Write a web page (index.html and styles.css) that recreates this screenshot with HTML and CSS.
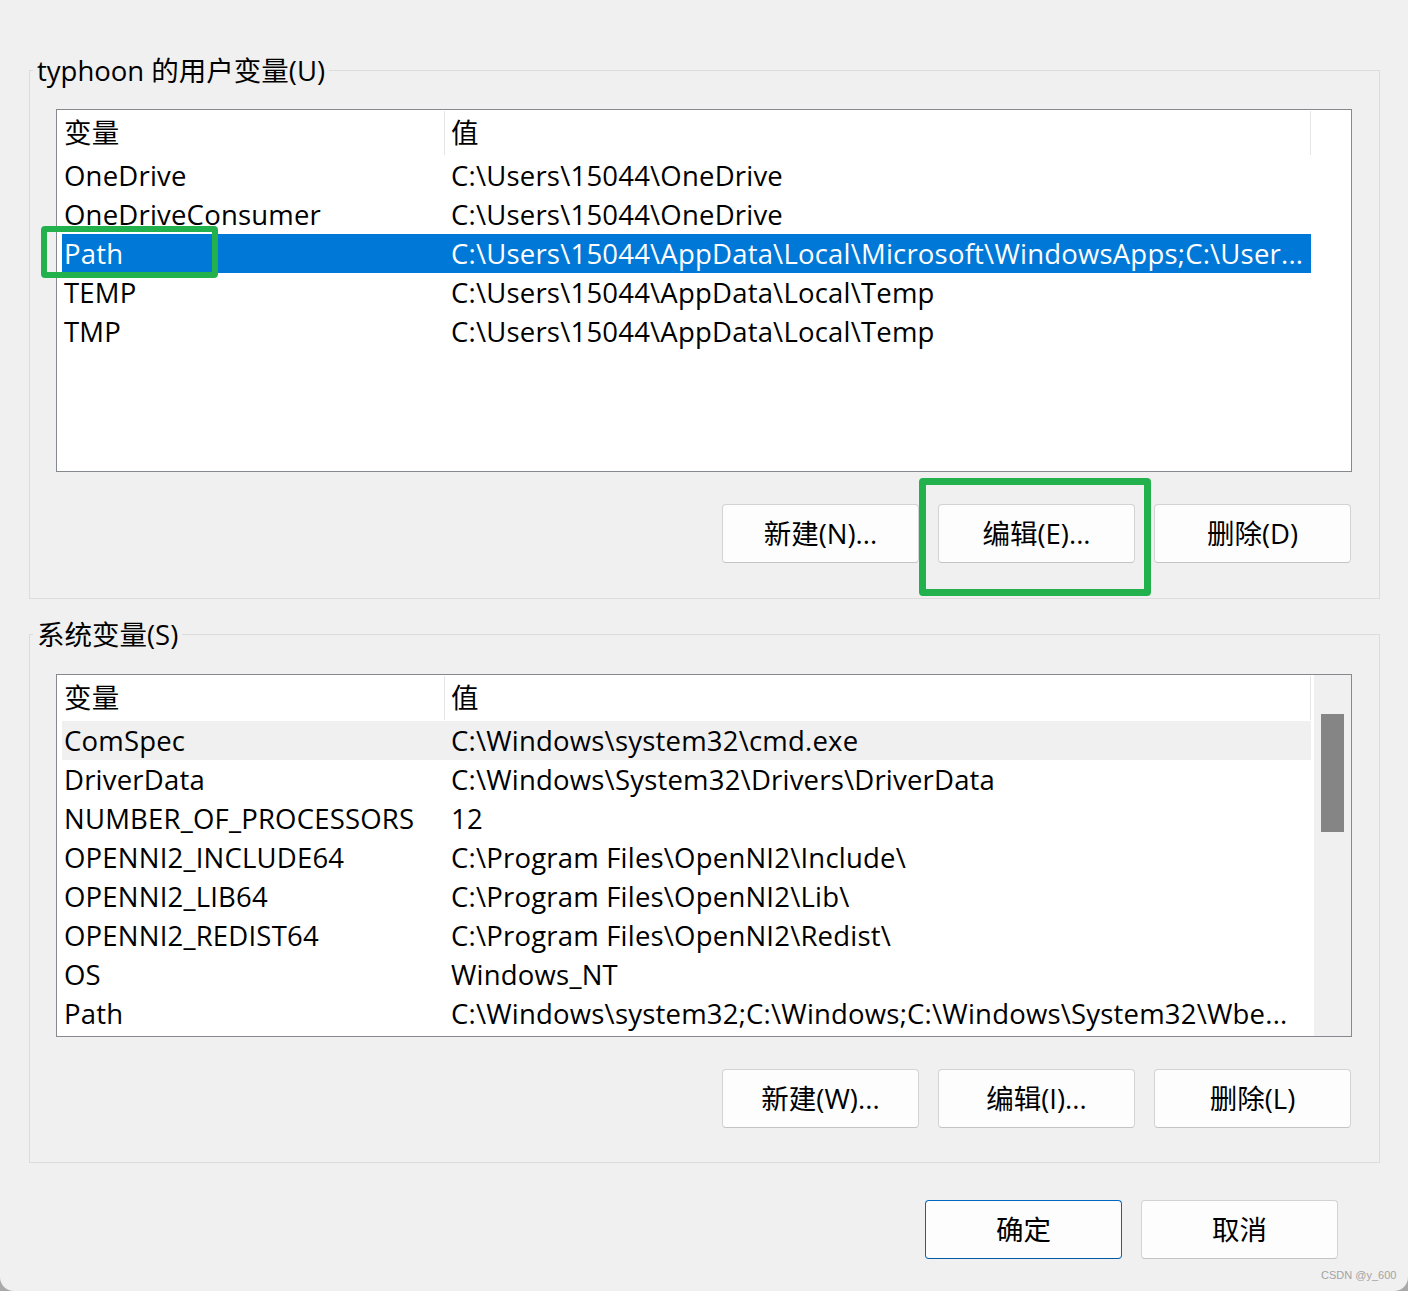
FILE: index.html
```html
<!DOCTYPE html>
<html lang="zh-CN">
<head>
<meta charset="utf-8">
<title>环境变量</title>
<link rel="stylesheet" href="styles.css">
</head>
<body>
<div class="window">
  <section class="group">
    <div class="group-title">typhoon 的用户变量(U)</div>
    <div class="list">
      <div class="list-body">
        <div class="row head">
          <div class="cell c1">变量</div>
          <div class="cell c2">值</div>
        </div>
        <div class="row"><div class="cell c1">OneDrive</div><div class="cell c2">C:\Users\15044\OneDrive</div></div>
        <div class="row"><div class="cell c1">OneDriveConsumer</div><div class="cell c2">C:\Users\15044\OneDrive</div></div>
        <div class="row selected"><div class="cell c1">Path</div><div class="cell c2">C:\Users\15044\AppData\Local\Microsoft\WindowsApps;C:\User...</div></div>
        <div class="row"><div class="cell c1">TEMP</div><div class="cell c2">C:\Users\15044\AppData\Local\Temp</div></div>
        <div class="row"><div class="cell c1">TMP</div><div class="cell c2">C:\Users\15044\AppData\Local\Temp</div></div>
      </div>
    </div>
    <div class="buttons">
      <button class="btn">新建(N)...</button>
      <button class="btn">编辑(E)...</button>
      <button class="btn">删除(D)</button>
    </div>
  </section>

  <section class="group group-sys">
    <div class="group-title">系统变量(S)</div>
    <div class="list">
      <div class="list-body">
        <div class="row head">
          <div class="cell c1">变量</div>
          <div class="cell c2">值</div>
        </div>
        <div class="row hover"><div class="cell c1">ComSpec</div><div class="cell c2">C:\Windows\system32\cmd.exe</div></div>
        <div class="row"><div class="cell c1">DriverData</div><div class="cell c2">C:\Windows\System32\Drivers\DriverData</div></div>
        <div class="row"><div class="cell c1">NUMBER_OF_PROCESSORS</div><div class="cell c2">12</div></div>
        <div class="row"><div class="cell c1">OPENNI2_INCLUDE64</div><div class="cell c2">C:\Program Files\OpenNI2\Include\</div></div>
        <div class="row"><div class="cell c1">OPENNI2_LIB64</div><div class="cell c2">C:\Program Files\OpenNI2\Lib\</div></div>
        <div class="row"><div class="cell c1">OPENNI2_REDIST64</div><div class="cell c2">C:\Program Files\OpenNI2\Redist\</div></div>
        <div class="row"><div class="cell c1">OS</div><div class="cell c2">Windows_NT</div></div>
        <div class="row"><div class="cell c1">Path</div><div class="cell c2">C:\Windows\system32;C:\Windows;C:\Windows\System32\Wbe...</div></div>
      </div>
      <div class="scrollbar"><div class="thumb"></div></div>
    </div>
    <div class="buttons">
      <button class="btn">新建(W)...</button>
      <button class="btn">编辑(I)...</button>
      <button class="btn">删除(L)</button>
    </div>
  </section>

  <div class="dialog-buttons">
    <button class="btn primary">确定</button>
    <button class="btn">取消</button>
  </div>

  <div class="mark mark-path"></div>
  <div class="mark mark-edit"></div>
  <div class="watermark">CSDN @y_600</div>
</div>
</body>
</html>
```

FILE: styles.css
```css
html {
  background: #a9a9a9;
}
body {
  margin: 0;
  font-family: "Open Sans", "Noto Sans CJK SC", sans-serif;
  font-size: 27.5px;
  letter-spacing: 0.2px;
  color: #000;
}
.window {
  position: relative;
  width: 1408px;
  height: 1291px;
  box-sizing: border-box;
  background: #f0f0f0;
  border-radius: 0 0 14px 14px;
  padding: 70px 28px 0 29px;
  display: flex;
  flex-direction: column;
  overflow: hidden;
}
.group {
  border: 1px solid #dcdcdc;
  padding: 0 27px 35px 26px;
}
.group-sys {
  margin-top: 35px;
  padding-bottom: 34px;
}
.group-title {
  height: 38px;
  line-height: 38px;
  margin: -19px 0 0 -23px;
  padding: 0 4px;
  width: fit-content;
  background: #f0f0f0;
  white-space: nowrap;
  letter-spacing: 0;
}
.list {
  margin-top: 19px;
  height: 363px;
  box-sizing: border-box;
  border: 1px solid #868a8e;
  background: #fff;
  display: flex;
  overflow: hidden;
}
.group-sys .list {
  margin-top: 20px;
}
.list-body {
  flex: 1;
  padding-left: 5px;
}
.row {
  display: grid;
  grid-template-columns: 382px 867px;
  height: 39px;
  line-height: 39px;
  width: 1249px;
}
.row.head {
  height: 46px;
  line-height: 44px;
  padding: 1px 0;
  box-sizing: border-box;
}
.cell {
  white-space: nowrap;
  overflow: hidden;
}
.c1 {
  padding-left: 2px;
}
.c2 {
  padding-left: 7px;
}
.head .c2 {
  border-left: 1px solid #e5e5e5;
  border-right: 1px solid #e5e5e5;
  padding-left: 6px;
}
.row.selected {
  background: #0078d7;
  color: #fff;
}
.row.hover {
  background: #f0f0f0;
}
.scrollbar {
  width: 37px;
  margin-left: 2px;
  background: #f0f0f0;
  padding-top: 39px;
  box-sizing: border-box;
}
.thumb {
  width: 23px;
  height: 118px;
  margin-left: 7px;
  background: #858585;
}
.buttons {
  display: flex;
  justify-content: flex-end;
  gap: 19px;
  margin-top: 32px;
  padding-right: 1px;
}
.btn {
  width: 197px;
  height: 59px;
  box-sizing: border-box;
  background: #fdfdfd;
  border: 1px solid #d3d3d3;
  border-bottom-color: #c4c4c4;
  border-radius: 4px;
  font-family: inherit;
  font-size: 27.5px;
  letter-spacing: 0;
  color: #000;
  padding: 0;
  line-height: 57px;
}
.btn.primary {
  border: 1px solid #0067c0;
  border-bottom-color: #0058a8;
}
.dialog-buttons {
  display: flex;
  justify-content: flex-end;
  gap: 19px;
  margin-top: 37px;
  padding-right: 42px;
}
.mark {
  position: absolute;
  box-sizing: border-box;
  border: 6px solid #23b14d;
  border-radius: 4px;
}
.mark-path {
  left: 41px;
  top: 226px;
  width: 177px;
  height: 52px;
}
.mark-edit {
  left: 919px;
  top: 478px;
  width: 232px;
  height: 118px;
  border-width: 7px;
}
.watermark {
  position: absolute;
  left: 1321px;
  top: 1269px;
  font-family: "Liberation Sans", Arial, sans-serif;
  font-size: 11px;
  letter-spacing: 0;
  color: #a3a3a3;
  white-space: nowrap;
}
```
